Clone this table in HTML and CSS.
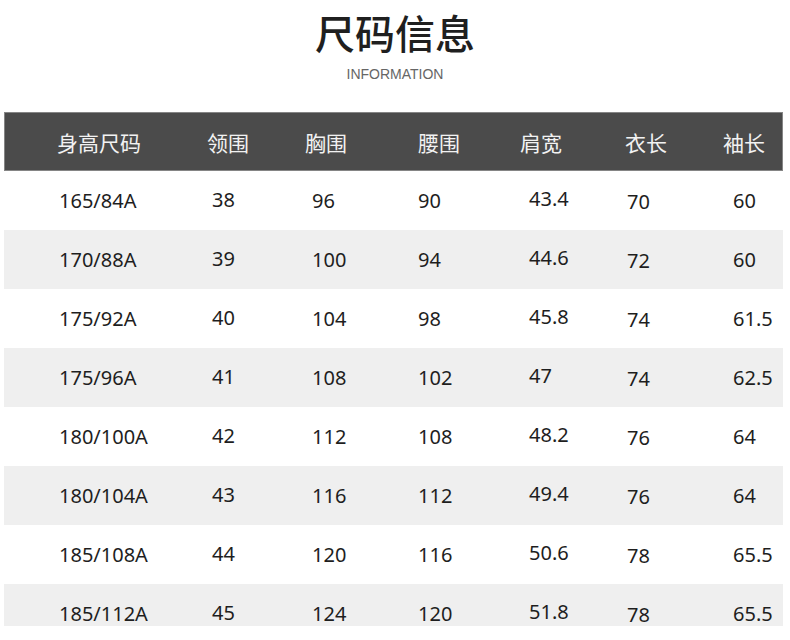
FILE: index.html
```html
<!DOCTYPE html>
<html lang="zh-CN">
<head>
<meta charset="utf-8">
<title>尺码信息</title>
<link rel="stylesheet" href="styles.css">
</head>
<body>
<div class="page">
  <header class="heading">
    <h1 class="title">尺码信息</h1>
    <p class="subtitle">INFORMATION</p>
  </header>
  <div class="table">
    <div class="row head">
      <div class="cell c1">身高尺码</div>
      <div class="cell c2">领围</div>
      <div class="cell c3">胸围</div>
      <div class="cell c4">腰围</div>
      <div class="cell c5">肩宽</div>
      <div class="cell c6">衣长</div>
      <div class="cell c7">袖长</div>
    </div>
    <div class="row">
      <div class="cell c1">165/84A</div><div class="cell c2">38</div><div class="cell c3">96</div><div class="cell c4">90</div><div class="cell c5">43.4</div><div class="cell c6">70</div><div class="cell c7">60</div>
    </div>
    <div class="row alt">
      <div class="cell c1">170/88A</div><div class="cell c2">39</div><div class="cell c3">100</div><div class="cell c4">94</div><div class="cell c5">44.6</div><div class="cell c6">72</div><div class="cell c7">60</div>
    </div>
    <div class="row">
      <div class="cell c1">175/92A</div><div class="cell c2">40</div><div class="cell c3">104</div><div class="cell c4">98</div><div class="cell c5">45.8</div><div class="cell c6">74</div><div class="cell c7">61.5</div>
    </div>
    <div class="row alt">
      <div class="cell c1">175/96A</div><div class="cell c2">41</div><div class="cell c3">108</div><div class="cell c4">102</div><div class="cell c5">47</div><div class="cell c6">74</div><div class="cell c7">62.5</div>
    </div>
    <div class="row">
      <div class="cell c1">180/100A</div><div class="cell c2">42</div><div class="cell c3">112</div><div class="cell c4">108</div><div class="cell c5">48.2</div><div class="cell c6">76</div><div class="cell c7">64</div>
    </div>
    <div class="row alt">
      <div class="cell c1">180/104A</div><div class="cell c2">43</div><div class="cell c3">116</div><div class="cell c4">112</div><div class="cell c5">49.4</div><div class="cell c6">76</div><div class="cell c7">64</div>
    </div>
    <div class="row">
      <div class="cell c1">185/108A</div><div class="cell c2">44</div><div class="cell c3">120</div><div class="cell c4">116</div><div class="cell c5">50.6</div><div class="cell c6">78</div><div class="cell c7">65.5</div>
    </div>
    <div class="row alt cut">
      <div class="cell c1">185/112A</div><div class="cell c2">45</div><div class="cell c3">124</div><div class="cell c4">120</div><div class="cell c5">51.8</div><div class="cell c6">78</div><div class="cell c7">65.5</div>
    </div>
  </div>
</div>
</body>
</html>
```

FILE: styles.css
```css
* { box-sizing: border-box; }

html, body {
  margin: 0;
  padding: 0;
  background: #ffffff;
}

.page {
  width: 790px;
  height: 640px;
  font-family: "Noto Sans", "Noto Sans CJK SC", sans-serif;
  color: #1e1e1e;
}

.heading {
  height: 112px;
  display: flex;
  flex-direction: column;
  align-items: center;
  padding-top: 10px;
}

.title {
  margin: 0;
  font-family: "Noto Sans CJK SC", sans-serif;
  font-size: 40px;
  font-weight: 500;
  line-height: 44px;
  color: #1f1f1f;
  letter-spacing: 0;
}

.subtitle {
  margin: 12px 0 0 0;
  font-family: "Liberation Sans", Arial, sans-serif;
  font-size: 14px;
  line-height: 16px;
  color: #666666;
}

.table {
  margin-left: 4px;
  width: 779px;
}

.row {
  display: grid;
  grid-template-columns: 150px 98px 113px 102px 105px 98px 1fr;
  padding-left: 53px;
  height: 59px;
  align-items: center;
  font-size: 20px;
  line-height: 20px;
}

.row.alt { background: #efefef; }

.row.cut {
  height: 42px;
  padding-top: 17px;
}

.row.head {
  background: #4b4b4b;
  border: 1px solid #858585;
  padding-left: 52px;
  color: #f2f2f2;
  font-family: "Noto Sans CJK SC", sans-serif;
  font-size: 21px;
  line-height: 24px;
}

.cell { white-space: nowrap; }

.row:not(.head) .c1 { padding-left: 2px; }
.row:not(.head) .c2 { padding-left: 5px; margin-top: -2px; }
.row:not(.head) .c3 { padding-left: 7px; }
.row:not(.head) .c4 { padding-left: 0; }
.row:not(.head) .c5 { padding-left: 9px; margin-top: -3px; }
.row:not(.head) .c6 { padding-left: 2px; margin-top: 3px; }
.row:not(.head) .c7 { padding-left: 10px; margin-top: 1px; }
```
